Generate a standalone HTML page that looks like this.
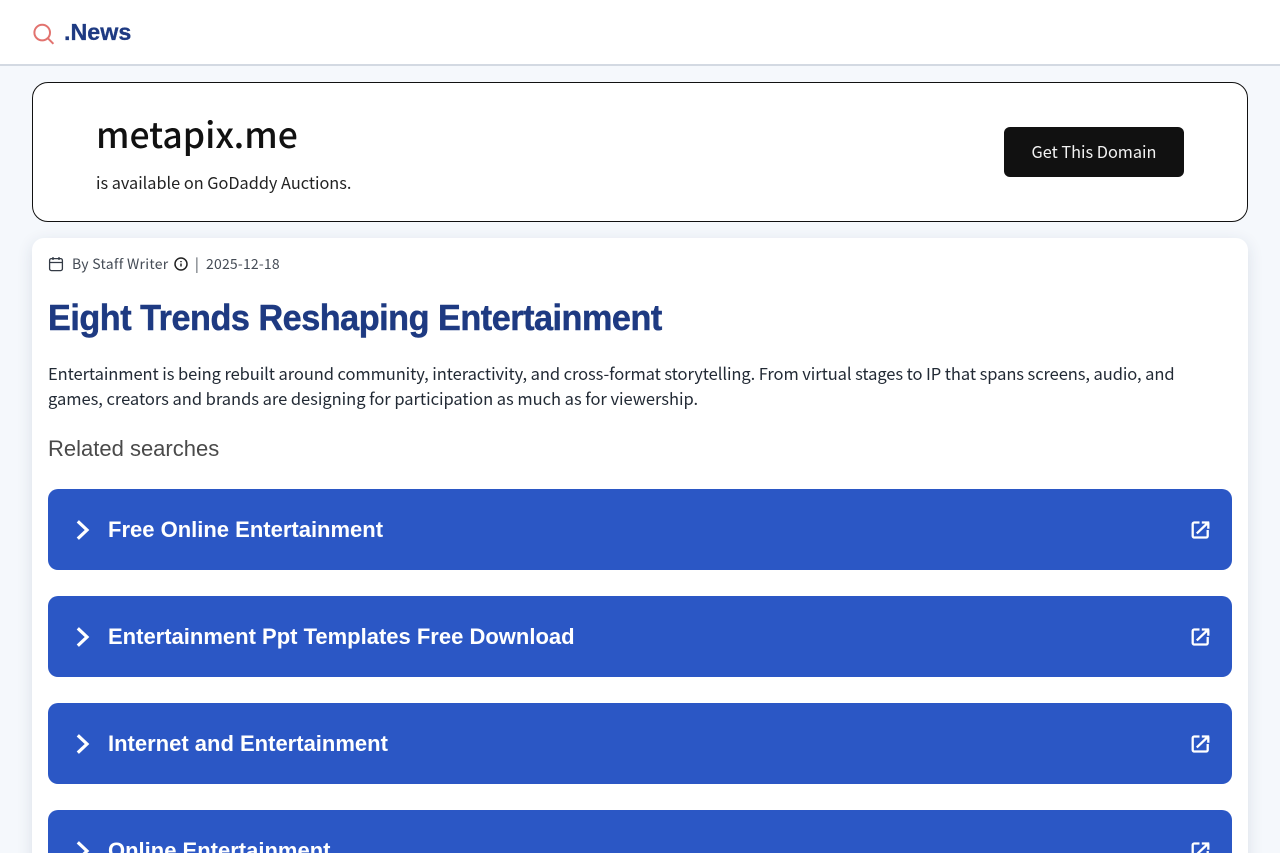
<!DOCTYPE html>
<html><head><meta charset="utf-8"><style>
html,body{margin:0;padding:0;width:1280px;height:853px;overflow:hidden;background:#f5f8fc;}
*{box-sizing:border-box}
#w{position:relative;width:1280px;height:853px;overflow:hidden;background:#f5f8fc;}
.t{position:absolute;white-space:nowrap;font-family:"Noto Sans CJK JP","Liberation Sans",sans-serif;}
.l{font-family:"Liberation Sans",sans-serif;}
.hdr{position:absolute;left:0;top:0;width:1280px;height:66px;background:#fff;border-bottom:2px solid #d3d9e2;}
.box{position:absolute;left:32px;top:82px;width:1216px;height:140px;background:#fff;border:1px solid #111;border-radius:16px;}
.btn{position:absolute;left:1004px;top:127px;width:180px;height:50px;background:#111;border-radius:6px;}
.card{position:absolute;left:32px;top:238px;width:1216px;height:640px;background:#fff;border-radius:12px;box-shadow:0 4px 16px rgba(30,50,90,.12);}
.bar{position:absolute;left:48px;width:1184px;height:81px;background:#2b57c5;border-radius:10px;}
.bar .x{position:absolute;left:60px;top:28px;font:bold 22px/26px "Liberation Sans",sans-serif;color:#fff;white-space:nowrap;}
.bar svg{position:absolute;fill:none;stroke:#fff;}
.c{left:23.300px;top:28px}
.o{left:1139.500px;top:29px}
</style></head><body><div id="w">
<div class="hdr"></div>
<svg style="position:absolute;left:32px;top:22px" width="24" height="24" viewBox="0 0 24 24" fill="none" stroke="#e2736f" stroke-width="2"><circle cx="10.200" cy="10.600" r="7.800"/><path d="M15.800 16.200l5.600 5.600"/></svg>
<div class="t l" style="left:64px;top:17px;font-size:23.300px;line-height:30px;font-weight:bold;color:#1e3a82;-webkit-text-stroke:.3px #1e3a82">.News</div>

<div class="box"></div>
<div class="t" style="left:96px;top:110px;font-size:35.500px;line-height:48px;font-weight:500;color:#111">metapix.me</div>
<div class="t" style="left:96px;top:170px;font-size:16.300px;line-height:24px;color:#222">is available on GoDaddy Auctions.</div>
<div class="btn"></div>
<div class="t" style="left:1004px;top:139px;width:180px;text-align:center;font-size:16.300px;line-height:24px;color:#f2f2f2">Get This Domain</div>

<div class="card"></div>
<svg style="position:absolute;left:48px;top:256px" width="16" height="16" viewBox="0 0 16 16" fill="none" stroke="#333a45" stroke-width="1.300"><rect x="1.600" y="2.600" width="12.800" height="12" rx="1.800"/><path d="M1.600 6.500h12.800M5 1v3M11 1v3"/></svg>
<div class="t" style="left:72px;top:253px;font-size:14px;line-height:22px;color:#444b55;letter-spacing:.28px">By Staff Writer</div>
<svg style="position:absolute;left:174px;top:257px" width="14" height="14" viewBox="0 0 14 14" fill="none" stroke="#222" stroke-width="1.500"><circle cx="7" cy="7" r="6"/><path d="M7 6.500v3M7 4v1.200"/></svg>
<div class="t" style="left:195px;top:253px;font-size:14px;line-height:22px;color:#444b55">|</div>
<div class="t" style="left:206px;top:253px;font-size:14px;line-height:22px;color:#444b55;letter-spacing:.2px">2025-12-18</div>

<div class="t l" style="left:48px;top:294px;font-size:36px;line-height:48px;font-weight:bold;color:#1e3a82;letter-spacing:-.5px;transform:scaleX(.95);transform-origin:0 0;-webkit-text-stroke:.5px #1e3a82">Eight Trends Reshaping Entertainment</div>
<div class="t" style="left:48px;top:361px;font-size:16.500px;line-height:25px;color:#222a35;letter-spacing:-.08px">Entertainment is being rebuilt around community, interactivity, and cross-format storytelling. From virtual stages to IP that spans screens, audio, and</div>
<div class="t" style="left:48px;top:386px;font-size:16.500px;line-height:25px;color:#222a35;letter-spacing:-.03px">games, creators and brands are designing for participation as much as for viewership.</div>
<div class="t l" style="left:48px;top:435px;font-size:22px;line-height:28px;color:#4a4a4a">Related searches</div>

<div class="bar" style="top:489px"><svg class="c" width="22" height="26" viewBox="0 0 22 26" stroke-width="3.200"><path d="M6.800 4.300l9.200 8.700-9.200 8.700"/></svg><div class="x">Free Online Entertainment</div><svg class="o" width="24" height="24" viewBox="0 0 24 24" stroke-width="2.300"><path d="M11.500 4.500H6.200a1.500 1.500 0 0 0-1.500 1.500v12a1.500 1.500 0 0 0 1.500 1.500h12a1.500 1.500 0 0 0 1.500-1.500V12M8.800 15.400L20.200 4.500M13.800 4.500h7.400M20.300 4.500v6.300"/></svg></div>
<div class="bar" style="top:596px"><svg class="c" width="22" height="26" viewBox="0 0 22 26" stroke-width="3.200"><path d="M6.800 4.300l9.200 8.700-9.200 8.700"/></svg><div class="x">Entertainment Ppt Templates Free Download</div><svg class="o" width="24" height="24" viewBox="0 0 24 24" stroke-width="2.300"><path d="M11.500 4.500H6.200a1.500 1.500 0 0 0-1.500 1.500v12a1.500 1.500 0 0 0 1.500 1.500h12a1.500 1.500 0 0 0 1.500-1.500V12M8.800 15.400L20.200 4.500M13.800 4.500h7.400M20.300 4.500v6.300"/></svg></div>
<div class="bar" style="top:703px"><svg class="c" width="22" height="26" viewBox="0 0 22 26" stroke-width="3.200"><path d="M6.800 4.300l9.200 8.700-9.200 8.700"/></svg><div class="x">Internet and Entertainment</div><svg class="o" width="24" height="24" viewBox="0 0 24 24" stroke-width="2.300"><path d="M11.500 4.500H6.200a1.500 1.500 0 0 0-1.500 1.500v12a1.500 1.500 0 0 0 1.500 1.500h12a1.500 1.500 0 0 0 1.500-1.500V12M8.800 15.400L20.200 4.500M13.800 4.500h7.400M20.300 4.500v6.300"/></svg></div>
<div class="bar" style="top:810px"><svg class="c" width="22" height="26" viewBox="0 0 22 26" stroke-width="3.200"><path d="M6.800 4.300l9.200 8.700-9.200 8.700"/></svg><div class="x">Online Entertainment</div><svg class="o" width="24" height="24" viewBox="0 0 24 24" stroke-width="2.300"><path d="M11.500 4.500H6.200a1.500 1.500 0 0 0-1.500 1.500v12a1.500 1.500 0 0 0 1.500 1.500h12a1.500 1.500 0 0 0 1.500-1.500V12M8.800 15.400L20.200 4.500M13.800 4.500h7.400M20.300 4.500v6.300"/></svg></div>
</div></body></html>
